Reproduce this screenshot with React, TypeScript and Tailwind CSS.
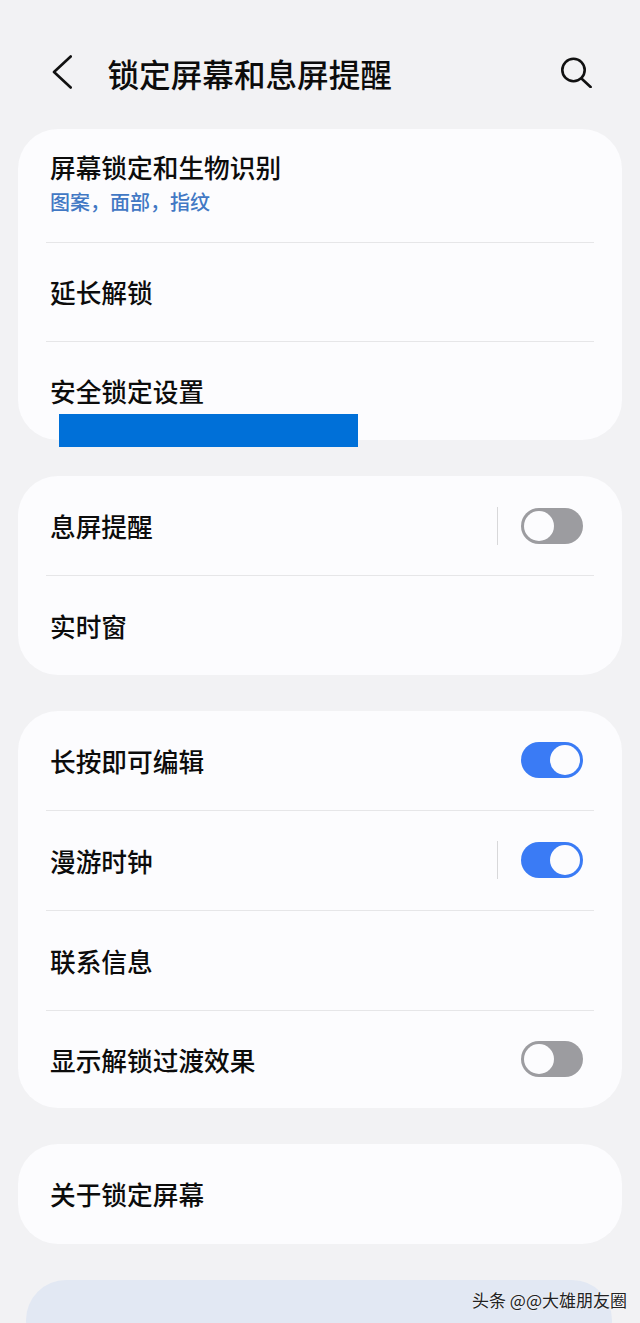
const font = "font-['Noto_Sans_CJK_SC','Noto_Sans',sans-serif]";

const Toggle = ({ on }: { on: boolean }) => (
  <div
    className={`flex h-[36px] w-[62px] items-center rounded-full px-[3px] ${
      on ? "justify-end bg-[#3a7bf5]" : "justify-start bg-[#9c9ca0]"
    }`}
  >
    <div className="h-[30px] w-[30px] rounded-full bg-[#fcfcfe]" />
  </div>
);

const Row = ({
  label,
  toggle,
  divider,
  last,
  raised,
  h = "h-[99px]",
}: {
  label: string;
  toggle?: boolean;
  divider?: boolean;
  last?: boolean;
  raised?: boolean;
  h?: string;
}) => (
  <div className="mx-[28px]">
    <div className={`flex items-center justify-between pl-[4px] pr-[11px] ${h}`}>
      <span className="text-[25.7px] font-medium leading-[36px] text-[#0c0c0c]">{label}</span>
      {toggle !== undefined && (
        <div className={`flex items-center ${raised ? "-translate-y-px" : ""}`}>
          {divider && <div className="mr-[23px] h-[38px] w-px bg-[#d8d8da]" />}
          <Toggle on={toggle} />
        </div>
      )}
    </div>
    {!last && <div className="h-px bg-[#e6e6e8]" />}
  </div>
);

export default function App() {
  return (
    <div className={`relative h-[1323px] w-[640px] overflow-hidden bg-[#f2f2f4] ${font}`}>
      <header className="flex h-[129px] items-start justify-between pl-[52px] pr-[48px] pt-[52px]">
        <div className="flex items-center">
          <svg width="20" height="36" viewBox="0 0 20 36" fill="none" stroke="#111" strokeWidth="2.6" strokeLinecap="round" strokeLinejoin="round">
            <path d="M18.7 1.5 2 17l16.7 15.5" />
          </svg>
          <h1 className="ml-[35.5px] text-[31.6px] font-medium leading-[42px] text-[#0c0c0c]">锁定屏幕和息屏提醒</h1>
        </div>
        <svg width="32" height="36" viewBox="0 0 32 36" fill="none" stroke="#111" strokeWidth="2.6" strokeLinecap="round">
          <circle cx="13.5" cy="18" r="11.2" />
          <path d="m22 27 8.6 8" />
        </svg>
      </header>

      <main className="flex flex-col gap-[36px] px-[18px]">
        <section className="relative rounded-[40px] bg-[#fcfcfe]">
          <div className="mx-[28px]">
            <div className="flex h-[112.5px] flex-col justify-center pb-[4px] pl-[4px]">
              <span className="text-[25.7px] font-medium leading-[36px] text-[#0c0c0c]">屏幕锁定和生物识别</span>
              <span className="mt-[2px] text-[20px] font-medium leading-[30px] text-[#4178c4]">{"图案\uFF0C面部\uFF0C指纹"}</span>
            </div>
            <div className="h-px bg-[#e6e6e8]" />
          </div>
          <Row label="延长解锁" h="h-[98px]" />
          <Row label="安全锁定设置" last h="h-[98.5px]" />
          <div className="absolute left-[41px] top-[285px] h-[33px] w-[299px] bg-[#0070d8]" />
        </section>

        <section className="rounded-[40px] bg-[#fcfcfe]">
          <Row label="息屏提醒" toggle={false} divider />
          <Row label="实时窗" last />
        </section>

        <section className="rounded-[40px] bg-[#fcfcfe]">
          <Row label="长按即可编辑" toggle raised />
          <Row label="漫游时钟" toggle divider raised />
          <Row label="联系信息" />
          <Row label="显示解锁过渡效果" toggle={false} last raised h="h-[97px]" />
        </section>

        <section className="rounded-[40px] bg-[#fcfcfe]">
          <Row label="关于锁定屏幕" last h="h-[100px]" />
        </section>
      </main>

      <div className="mx-[26px] mt-[36px] h-[80px] w-[586px] rounded-[40px] bg-[#e2e8f3]" />

      <div className="absolute bottom-[12px] right-[13px] text-[17px] leading-[22px] text-[#222] [text-shadow:0_0_2px_#fff]">
        头条 @@大雄朋友圈
      </div>
    </div>
  );
}
